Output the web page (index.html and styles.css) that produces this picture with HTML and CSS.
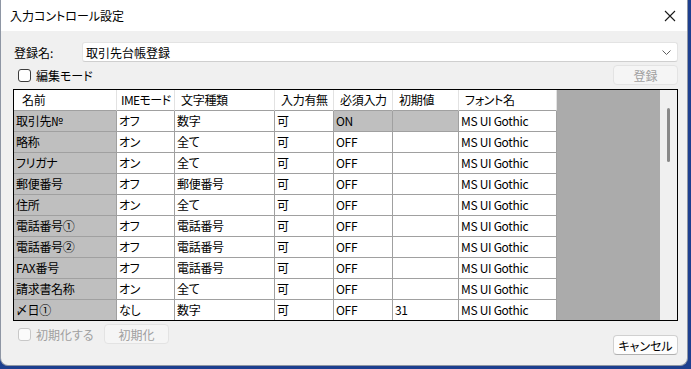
FILE: index.html
```html
<!DOCTYPE html>
<html lang="ja">
<head>
  <meta charset="UTF-8" />
  <meta name="viewport" content="width=device-width, initial-scale=1.0" />
  <title>入力コントロール設定</title>
  <link rel="stylesheet" href="styles.css">
</head>
<body>
  <div class="window">
    <!-- Title bar -->
    <div class="titlebar">
      <span class="title">入力コントロール設定</span>
      <svg class="close" width="12" height="12" viewBox="0 0 12 12">
        <path d="M1 1 L11 11 M11 1 L1 11" stroke="#1a1a1a" stroke-width="1.1" fill="none" />
      </svg>
    </div>

    <div class="content">
      <!-- Registration name -->
      <div class="name-row">
        <label class="name-label">登録名:</label>
        <div class="combo">
          <span>取引先台帳登録</span>
          <svg class="chevron" width="9" height="5" viewBox="0 0 9 5">
            <path d="M0.5 0.5 L4.5 4.5 L8.5 0.5" stroke="#606060" stroke-width="1" fill="none" />
          </svg>
        </div>
      </div>

      <div class="edit-row">
        <label class="check"><span class="box"></span>編集モード</label>
        <button class="btn" disabled>登録</button>
      </div>

      <!-- Grid -->
      <div class="grid">
        <div class="cells">
          <div class="head first">名前</div>
          <div class="head ime">IMEモード</div>
          <div class="head">文字種類</div>
          <div class="head">入力有無</div>
          <div class="head">必須入力</div>
          <div class="head">初期値</div>
          <div class="head">フォント名</div>

          <div class="cell name">取引先№</div>
          <div class="cell">オフ</div>
          <div class="cell">数字</div>
          <div class="cell">可</div>
          <div class="cell locked">ON</div>
          <div class="cell locked"></div>
          <div class="cell">MS UI Gothic</div>

          <div class="cell name">略称</div>
          <div class="cell">オン</div>
          <div class="cell">全て</div>
          <div class="cell">可</div>
          <div class="cell">OFF</div>
          <div class="cell"></div>
          <div class="cell">MS UI Gothic</div>

          <div class="cell name">フリガナ</div>
          <div class="cell">オン</div>
          <div class="cell">全て</div>
          <div class="cell">可</div>
          <div class="cell">OFF</div>
          <div class="cell"></div>
          <div class="cell">MS UI Gothic</div>

          <div class="cell name">郵便番号</div>
          <div class="cell">オフ</div>
          <div class="cell">郵便番号</div>
          <div class="cell">可</div>
          <div class="cell">OFF</div>
          <div class="cell"></div>
          <div class="cell">MS UI Gothic</div>

          <div class="cell name">住所</div>
          <div class="cell">オン</div>
          <div class="cell">全て</div>
          <div class="cell">可</div>
          <div class="cell">OFF</div>
          <div class="cell"></div>
          <div class="cell">MS UI Gothic</div>

          <div class="cell name">電話番号①</div>
          <div class="cell">オフ</div>
          <div class="cell">電話番号</div>
          <div class="cell">可</div>
          <div class="cell">OFF</div>
          <div class="cell"></div>
          <div class="cell">MS UI Gothic</div>

          <div class="cell name">電話番号②</div>
          <div class="cell">オフ</div>
          <div class="cell">電話番号</div>
          <div class="cell">可</div>
          <div class="cell">OFF</div>
          <div class="cell"></div>
          <div class="cell">MS UI Gothic</div>

          <div class="cell name">FAX番号</div>
          <div class="cell">オフ</div>
          <div class="cell">電話番号</div>
          <div class="cell">可</div>
          <div class="cell">OFF</div>
          <div class="cell"></div>
          <div class="cell">MS UI Gothic</div>

          <div class="cell name">請求書名称</div>
          <div class="cell">オン</div>
          <div class="cell">全て</div>
          <div class="cell">可</div>
          <div class="cell">OFF</div>
          <div class="cell"></div>
          <div class="cell">MS UI Gothic</div>

          <div class="cell name last">〆日①</div>
          <div class="cell last">なし</div>
          <div class="cell last">数字</div>
          <div class="cell last">可</div>
          <div class="cell last">OFF</div>
          <div class="cell last">31</div>
          <div class="cell last">MS UI Gothic</div>
        </div>
        <div class="filler"></div>
        <div class="vscroll"><div class="thumb"></div></div>
      </div>

      <!-- Footer -->
      <div class="foot">
        <label class="check disabled reset-check"><span class="box"></span>初期化する</label>
        <button class="btn" disabled>初期化</button>
        <button class="btn cancel">キャンセル</button>
      </div>
    </div>
  </div>
</body>
</html>
```

FILE: styles.css
```css
body {
  margin: 0;
  padding: 0;
  background-color: #1d3f8f;
  font-family: "Noto Sans CJK JP", "Noto Sans", sans-serif;
  font-size: 12px;
  font-feature-settings: "palt";
  color: #000;
}

.window {
  width: 688px;
  height: 366px;
  box-sizing: border-box;
  background-color: #f0f0f0;
  border: 1px solid #8e96a4;
  border-top: none;
  border-radius: 0 0 8px 8px;
  overflow: hidden;
}

.titlebar {
  height: 31px;
  background-color: #fff;
  display: flex;
  align-items: center;
  padding: 0 6px 0 9px;
}

.title {
  flex: 1;
  line-height: 16px;
  padding-top: 1px;
}

.close {
  margin-right: 5px;
}

.content {
  padding: 0 9px 0 12px;
}

/* Registration name row */
.name-row {
  display: flex;
  align-items: center;
  margin-top: 11px;
  height: 20px;
}

.name-label {
  width: 68px;
  padding-left: 1px;
}

.combo {
  flex: 1;
  height: 20px;
  box-sizing: border-box;
  background-color: #fff;
  border: 1px solid #e3e3e3;
  border-bottom-color: #cfcfcf;
  border-radius: 3px;
  display: flex;
  align-items: center;
  padding: 0 4px 0 3px;
}

.combo span {
  flex: 1;
}

.chevron {
  margin-right: 2px;
}

.edit-row {
  display: flex;
  align-items: center;
  justify-content: space-between;
  margin-top: 3px;
  height: 20px;
}

/* Checkboxes */
.check {
  display: flex;
  align-items: center;
  margin-left: 5px;
}

.check .box {
  width: 13px;
  height: 13px;
  box-sizing: border-box;
  border: 1px solid #3c3c3c;
  border-radius: 3px;
  background-color: #fff;
  margin-right: 5px;
}

.check.disabled {
  color: #a0a0a0;
}

.check.disabled .box {
  border-color: #c8c8c8;
  background-color: #fbfbfb;
}

/* Buttons */
.btn {
  width: 65px;
  height: 20px;
  padding: 0;
  font-family: inherit;
  font-size: 12px;
  font-feature-settings: "palt";
  background-color: #fdfdfd;
  color: #000;
  border: 1px solid #d0d0d0;
  border-bottom-color: #b0b0b0;
  border-radius: 4px;
}

.btn:disabled {
  color: #a0a0a0;
  background-color: #f5f5f5;
  border-color: #e3e3e3;
}

/* Grid */
.grid {
  display: flex;
  margin-top: 4px;
  border: 1px solid #000;
  height: 230px;
}

.cells {
  display: grid;
  grid-template-columns: 103px 58px 100px 59px 59px 66px 98px;
  grid-template-rows: repeat(10, 21px) 20px;
  letter-spacing: -0.3px;
}

.head,
.cell {
  box-sizing: border-box;
  border-right: 1px solid #a0a0a0;
  border-bottom: 1px solid #a0a0a0;
  line-height: 20px;
  padding-left: 2px;
  white-space: nowrap;
  overflow: hidden;
  background-color: #fff;
}

.head {
  padding-left: 6px;
  border-right-color: #e2e2e2;
}

.head.first {
  padding-left: 8px;
}

.head.ime {
  padding-left: 4px;
  letter-spacing: -0.6px;
}

.cell.name,
.cell.locked {
  background-color: #bfbfbf;
}

.cell.last {
  border-bottom: none;
}

.filler {
  width: 103px;
  background-color: #ababab;
}

.vscroll {
  width: 17px;
  background-color: #f0f0f0;
}

.thumb {
  width: 3px;
  height: 54px;
  margin: 18px 0 0 7px;
  background-color: #8a8a8a;
  border-radius: 2px;
}

/* Footer */
.foot {
  display: flex;
  align-items: flex-start;
  margin-top: 3px;
}

.reset-check {
  width: 86px;
  height: 20px;
}

.cancel {
  margin-left: auto;
  margin-top: 11px;
}
```
